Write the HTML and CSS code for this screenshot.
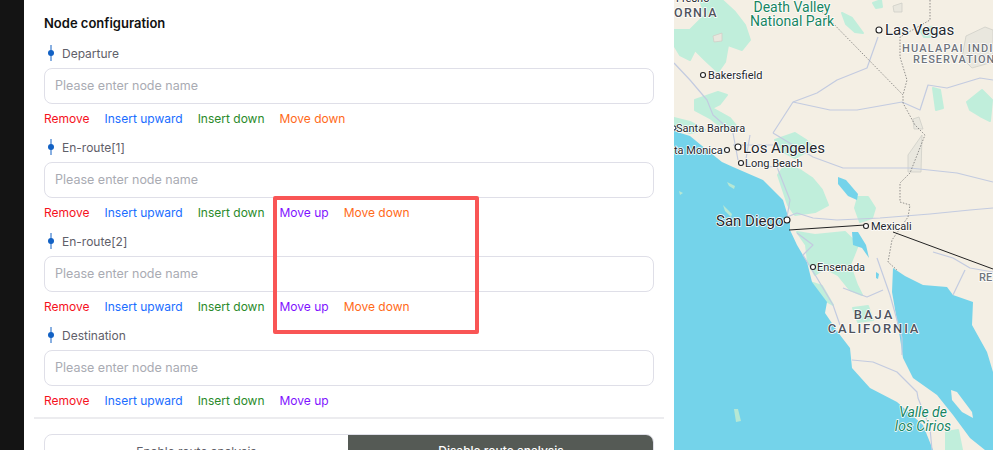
FILE: index.html
```html
<!DOCTYPE html>
<html lang="en">
  <head>
    <meta charset="utf-8">
    <title>Node configuration</title>
    <link rel="stylesheet" href="styles.css">
  </head>
  <body>
    <!-- Left panel -->
    <div class="panel">
      <h3 class="panel-title">Node configuration</h3>

      <div class="nodes">
        <div class="node">
          <div class="node-label">
            <svg class="pin" width="6" height="16" viewBox="0 0 6 16"><path d="M3 0V16" stroke="#1261c4" stroke-width="1"/><circle cx="3" cy="8" r="3" fill="#1261c4"/></svg>
            Departure
          </div>
          <input class="node-input" type="text" placeholder="Please enter node name">
          <div class="actions">
            <a class="act-remove">Remove</a>
            <a class="act-up">Insert upward</a>
            <a class="act-down">Insert down</a>
            <a class="act-movedown">Move down</a>
          </div>
        </div>

        <div class="node">
          <div class="node-label">
            <svg class="pin" width="6" height="16" viewBox="0 0 6 16"><path d="M3 0V16" stroke="#1261c4" stroke-width="1"/><circle cx="3" cy="8" r="3" fill="#1261c4"/></svg>
            En-route[1]
          </div>
          <input class="node-input" type="text" placeholder="Please enter node name">
          <div class="actions">
            <a class="act-remove">Remove</a>
            <a class="act-up">Insert upward</a>
            <a class="act-down">Insert down</a>
            <a class="act-moveup">Move up</a>
            <a class="act-movedown">Move down</a>
          </div>
        </div>

        <div class="node">
          <div class="node-label">
            <svg class="pin" width="6" height="16" viewBox="0 0 6 16"><path d="M3 0V16" stroke="#1261c4" stroke-width="1"/><circle cx="3" cy="8" r="3" fill="#1261c4"/></svg>
            En-route[2]
          </div>
          <input class="node-input" type="text" placeholder="Please enter node name">
          <div class="actions">
            <a class="act-remove">Remove</a>
            <a class="act-up">Insert upward</a>
            <a class="act-down">Insert down</a>
            <a class="act-moveup">Move up</a>
            <a class="act-movedown">Move down</a>
          </div>
        </div>

        <div class="node">
          <div class="node-label">
            <svg class="pin" width="6" height="16" viewBox="0 0 6 16"><path d="M3 0V16" stroke="#1261c4" stroke-width="1"/><circle cx="3" cy="8" r="3" fill="#1261c4"/></svg>
            Destination
          </div>
          <input class="node-input" type="text" placeholder="Please enter node name">
          <div class="actions">
            <a class="act-remove">Remove</a>
            <a class="act-up">Insert upward</a>
            <a class="act-down">Insert down</a>
            <a class="act-moveup">Move up</a>
          </div>
        </div>
      </div>

      <div class="divider"></div>

      <div class="segment">
        <div class="segment-item">Enable route analysis</div>
        <div class="segment-item segment-active">Disable route analysis</div>
      </div>

      <!-- Red highlight from the annotated screenshot -->
      <div class="highlight"></div>
    </div>

    <!-- Map, drawn in page coordinates -->
    <div class="map">
      <svg width="319" height="450" viewBox="674 0 319 450">
        <rect x="674" y="0" width="319" height="450" fill="#f4efe4"/>

        <!-- parks -->
        <g fill="#c0eedb" stroke="#c0eedb" stroke-width="2" stroke-linejoin="round">
          <path d="M700 0L722 0L735 12L745 25L750 40L742 50L728 45L725 62L718 72L705 60L695 50L690 60L680 55L674 45V30L690 30L705 15Z"/>
          <path d="M695 100L718 92L727 95L720 104L712 108L730 118L738 128L725 130L710 118L695 110Z"/>
          <path d="M674 118L690 122L705 130L690 133L674 128Z"/>
          <path d="M775 140L795 133L806 140L815 150L806 152L795 158L780 150Z"/>
          <path d="M785 165L800 170L812 178L822 190L828 205L815 212L795 215L788 205L783 190L778 175Z"/>
          <path d="M858 197L868 197L875 208L872 218L860 222L855 208Z"/>
          <path d="M797 232L815 235L845 232L858 245L850 265L857 285L862 295L850 290L838 275L825 268L815 275L808 262L806 245Z"/>
          <path d="M810 282L822 286L833 305L824 300L814 292Z"/>
          <path d="M853 308L868 306L873 320L858 322Z"/>
          <path d="M842 13L852 18L863 33L855 32L846 24Z"/>
          <path d="M933 88L940 90L943 108L936 110Z"/>
          <path d="M967 102L982 90L992 100L990 121L980 116L970 110Z"/>
          <path d="M873 3L881 0L882 7L876 8Z"/>
          <path d="M920 30L932 27L933 37L924 37Z"/>
          <path d="M946 432L958 430L962 450H946Z"/>
        </g>

        <!-- reservation patches -->
        <g fill="#e9e7de" stroke="#cfcfc8" stroke-width="0.8">
          <path d="M713 36L722 33L722 41L714 42Z"/>
          <path d="M893 6L902 3L902 12L894 12Z"/>
          <path d="M913 119L919 117L923 129L914 129Z"/>
          <path d="M908 155L922 135L921 172L908 172Z"/>
          <path d="M966 36L985 27L993 30V62L972 68L962 58Z"/>
        </g>

        <!-- water -->
        <path fill="#74d3ea" d="M674 131L690 136L707 150L722 162L733 167L763 180L783 200L790 223L790 230L797 245L807 262L812 282L827 302L825 313L840 335L850 348L852 368L870 388L897 402L923 425L933 450H674Z"/>
        <path fill="#74d3ea" d="M893 268L905 276L923 285L947 287L953 295L973 302L972 325L987 352L993 372V450H985L970 438L953 415L937 395L913 378L903 358L900 338L892 292Z"/>
        <path fill="#74d3ea" d="M838 177L846 180L858 194L857 200L848 196L838 184Z"/>
        <path fill="#74d3ea" d="M852 232L858 232L866 245L869 258L862 248L853 245Z"/>
        <path fill="#74d3ea" d="M876 272L879 274L878 279L876 278Z"/>
        <path fill="#f4efe4" d="M951 390L957 392L972 412L973 418L962 412L952 400Z"/>

        <!-- small islands -->
        <g fill="#b6e8d4">
          <path d="M734 409L738 409L741 421L736 422Z"/>
          <path d="M727 182L735 186L734 189L729 186Z"/>
          <path d="M723 205L732 214L731 217L725 211Z"/>
          <path d="M679 191L683 193L680 195Z"/>
        </g>

        <!-- roads -->
        <g fill="none" stroke="#c3cbe0" stroke-width="1.2" stroke-linejoin="round">
          <path d="M674 63L690 80L707 100L713 115L730 130"/>
          <path d="M773 133L793 102L817 93L837 80L867 68L878 37"/>
          <path d="M793 102L830 110L857 110L902 102L920 110L928 85L947 88L980 78L993 80"/>
          <path d="M773 133L813 157L843 168L910 168L957 173L993 182"/>
          <path d="M787 217L797 213L813 218L837 220L880 218L930 214L970 210L993 208"/>
          <path d="M777 167L790 200L787 217"/>
          <path d="M733 133L738 160M750 135L745 165M733 145L775 145M745 165L777 167"/>
          <path d="M797 233L813 245L803 255L817 278L833 305L840 325"/>
          <path d="M843 288L867 297L883 290"/>
          <path d="M877 258L890 295L902 338L902 355"/>
          <path d="M852 360L873 362L897 372L917 392L918 398L930 428L932 450"/>
          <path d="M933 252L953 258L970 268L993 272"/>
          <path d="M965 270L953 295"/>
        </g>

        <!-- borders -->
        <g fill="none" stroke="#666" stroke-width="0.7" stroke-dasharray="1.5 1.5">
          <path d="M820 10L903 95L903 103L915 125L925 135L910 173L900 183L900 202L910 205L908 217L892 240L888 262L897 270"/>
          <path d="M930 0L930 20L900 37L900 57L907 80L903 95"/>
        </g>

        <!-- route -->
        <g fill="none" stroke="#222" stroke-width="1">
          <path d="M789 230L865 225"/>
          <path d="M893 232L993 269"/>
        </g>

        <!-- place dots -->
        <g fill="#fff" stroke="#222" stroke-width="1.1">
          <circle cx="879" cy="30" r="3"/>
          <circle cx="703" cy="75" r="2.5"/>
          <circle cx="674" cy="128" r="2"/>
          <circle cx="727" cy="150" r="2.5"/>
          <circle cx="738" cy="147" r="3"/>
          <circle cx="741" cy="163" r="2.5"/>
          <circle cx="787" cy="220" r="3"/>
          <circle cx="866" cy="226" r="2.5"/>
          <circle cx="813" cy="267" r="2.5"/>
        </g>

        <!-- labels -->
        <text class="lbl" x="676" y="2" font-size="11">Fresno</text>
        <text class="lbl lbl-region" x="674" y="17" font-size="12.5" letter-spacing="1.3">ORNIA</text>
        <text class="lbl lbl-green" x="792" y="12" font-size="14" text-anchor="middle">Death Valley</text>
        <text class="lbl lbl-green" x="792" y="26" font-size="14" text-anchor="middle">National Park</text>
        <text class="lbl" x="885" y="35" font-size="15">Las Vegas</text>
        <text class="lbl lbl-grey" x="902" y="52" font-size="11" letter-spacing="1.2">HUALAPAI INDIAN</text>
        <text class="lbl lbl-grey" x="913" y="63" font-size="11" letter-spacing="1">RESERVATION</text>
        <text class="lbl" x="708" y="79" font-size="11">Bakersfield</text>
        <text class="lbl" x="676" y="132" font-size="11">Santa Barbara</text>
        <text class="lbl" x="674" y="154" font-size="11">ta Monica</text>
        <text class="lbl" x="743" y="153" font-size="15">Los Angeles</text>
        <text class="lbl" x="745" y="167" font-size="11">Long Beach</text>
        <text class="lbl" x="716" y="226" font-size="15">San Diego</text>
        <text class="lbl" x="871" y="230" font-size="11">Mexicali</text>
        <text class="lbl" x="817" y="271" font-size="11">Ensenada</text>
        <text class="lbl lbl-grey" x="979" y="281" font-size="11">RE</text>
        <text class="lbl lbl-region" x="874" y="319" font-size="13" letter-spacing="2" text-anchor="middle">BAJA</text>
        <text class="lbl lbl-region" x="874" y="333" font-size="13" letter-spacing="1.9" text-anchor="middle">CALIFORNIA</text>
        <text class="lbl lbl-green lbl-italic" x="923" y="417" font-size="14" text-anchor="middle">Valle de</text>
        <text class="lbl lbl-green lbl-italic" x="923" y="431" font-size="14" text-anchor="middle">los Cirios</text>
      </svg>
    </div>
  </body>
</html>
```

FILE: styles.css
```css
html, body {
  margin: 0;
  height: 100%;
}

body {
  display: flex;
  background: #141414;
  font-family: 'Inter', sans-serif;
  overflow: hidden;
}

/* Left panel */
.panel {
  position: relative;
  width: 630px;
  height: 450px;
  margin-left: 24px;
  padding: 0 10px;
  background: #fff;
  flex-shrink: 0;
  overflow: hidden;
}

.panel-title {
  margin: 0;
  padding: 15px 10px 0;
  height: 30px;
  font-size: 13px;
  line-height: 16px;
  font-weight: 600;
  color: #111;
}

.nodes {
  padding: 0 10px;
}

.node {
  height: 94px;
}

.node-label {
  display: flex;
  align-items: center;
  gap: 8px;
  height: 16px;
  padding-left: 4px;
  font-size: 12px;
  color: #5f6069;
}

.pin {
  flex-shrink: 0;
}

.node-input {
  display: block;
  width: 100%;
  height: 36px;
  margin-top: 7px;
  padding: 0 10px 2px;
  box-sizing: border-box;
  border: 1px solid #dfdfe8;
  border-radius: 8px;
  background: #fff;
  font-family: inherit;
  font-size: 12.5px;
  outline: none;
}

.node-input::placeholder {
  color: #a9abb3;
}

.actions {
  display: flex;
  gap: 15px;
  margin-top: 7px;
  font-size: 12px;
  line-height: 16px;
}

.act-remove { color: #f5121d; }
.act-up { color: #1a6dff; }
.act-down { color: #2a8a2a; }
.act-moveup { color: #7f13ff; }
.act-movedown { color: #ff6a1a; }

.divider {
  height: 2px;
  margin-top: -4px;
  background: #ececef;
}

.segment {
  display: flex;
  height: 40px;
  margin: 15px 10px 0;
  border: 1px solid #dfdfe8;
  border-radius: 8px;
  overflow: hidden;
  box-sizing: border-box;
  font-size: 12px;
}

.segment-item {
  flex: 0 0 303px;
  padding-top: 9px;
  text-align: center;
  color: #5f6069;
}

.segment-active {
  flex: 1;
  margin: -1px -1px -1px 0;
  background: #555a55;
  color: #fff;
  font-weight: 500;
}

/* Annotation box */
.highlight {
  position: absolute;
  left: 249px;
  top: 196px;
  width: 198px;
  height: 130px;
  border: 4px solid #f95555;
  border-radius: 2px;
}

/* Map */
.map {
  flex: 1;
  height: 450px;
  overflow: hidden;
}

.map svg {
  display: block;
}

.lbl {
  font-family: 'Roboto', sans-serif;
  fill: #25272c;
  stroke: #fff;
  stroke-width: 1.5px;
  paint-order: stroke;
  stroke-linejoin: round;
}

.lbl-green {
  fill: #17855f;
}

.lbl-italic {
  font-style: italic;
}

.lbl-grey {
  fill: #70747c;
  font-weight: 500;
}

.lbl-region {
  fill: #50535c;
  font-weight: 500;
}
```
